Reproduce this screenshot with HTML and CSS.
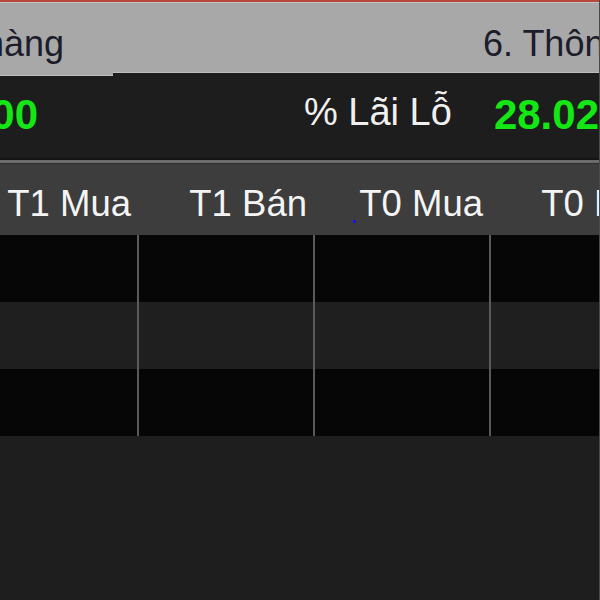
FILE: index.html
```html
<!DOCTYPE html>
<html lang="vi">
<head>
    <meta charset="UTF-8">
    <title>Danh mục</title>
    <link rel="stylesheet" href="styles.css">
</head>
<body>
    <div class="app">
        <div class="topline"></div>
        <div class="tabs">
            <div class="tab tab-active"><span class="tab-text">hàng</span></div>
            <div class="tab tab-next"><span class="tab-text">6. Thông tin</span></div>
        </div>
        <div class="summary">
            <div class="sum-value sum-prev">00</div>
            <div class="sum-label">% Lãi Lỗ</div>
            <div class="sum-value">28.02</div>
        </div>
        <div class="divider"></div>
        <div class="grid">
            <div class="grid-head">
                <div class="head-cell">T1 Mua</div>
                <div class="head-cell">T1 Bán</div>
                <div class="head-cell"><span class="focus-dot"></span>T0 Mua</div>
                <div class="head-cell">T0 Bán</div>
            </div>
            <div class="grid-row row-dark">
                <div class="cell"></div><div class="cell"></div><div class="cell"></div><div class="cell"></div>
            </div>
            <div class="grid-row row-alt">
                <div class="cell"></div><div class="cell"></div><div class="cell"></div><div class="cell"></div>
            </div>
            <div class="grid-row row-dark">
                <div class="cell"></div><div class="cell"></div><div class="cell"></div><div class="cell"></div>
            </div>
        </div>
    </div>
</body>
</html>
```

FILE: styles.css
```css
html, body {
    margin: 0;
    padding: 0;
    background-color: #1e1e1e;
    overflow: hidden;
}
.app {
    width: 600px;
    height: 600px;
    overflow: hidden;
    font-family: 'Liberation Sans', Arial, sans-serif;
    border-right: 1px solid #4a4a4a; /* vien cua so */
    box-sizing: border-box;
}
.topline {
    height: 2px;
    background-color: #b5473c; /* vien do cua so */
    border-bottom: 1px solid #c4c4c4;
}
/* Tabs */
.tabs {
    display: flex;
    height: 70px;
    background-color: #a8a8a8;
    border-bottom: 1px solid #bdbdbd;
    box-sizing: border-box;
}
.tab {
    font-size: 36px;
    line-height: 36px;
    color: #1c1c2a;
    white-space: nowrap;
    overflow: hidden;
    padding-top: 23px;
    box-sizing: border-box;
}
.tab-active {
    width: 113px;
    height: 73px;
    margin-bottom: -3px;
    position: relative;
    background-color: #a8a8a8;
    border-bottom: 1px solid #bdbdbd;
}
.tab-active .tab-text {
    margin-left: -16px;
}
.tab-next {
    margin-left: 370px;
    flex: 1;
}
/* Summary bar */
.summary {
    display: flex;
    align-items: flex-start;
    height: 85px;
    padding-top: 21px;
    box-sizing: border-box;
    background-color: #1d1d1d;
    white-space: nowrap;
}
.sum-value {
    font-size: 42px;
    line-height: 42px;
    font-weight: 700;
    color: #14e814;
}
.sum-prev {
    width: 38px;
    display: flex;
    justify-content: flex-end;
}
.sum-label {
    width: 421px;
    text-align: right;
    font-size: 38px;
    line-height: 37px;
    color: #f0f0f0;
    margin-right: 42px;
}
.divider {
    height: 3px;
    border-top: 2px solid #141414;
    border-bottom: 1px solid #2e2e2e;
    background-color: #6c6c6c;
}
/* Grid */
.grid {
    margin-left: -37px;
    width: 704px;
}
.grid-head, .grid-row {
    display: grid;
    grid-template-columns: repeat(4, 176px);
}
.grid-head {
    height: 71px;
    background-color: #3d3d3d;
}
.head-cell {
    font-size: 36.5px;
    line-height: 36px;
    color: #f4f4f4;
    text-align: right;
    padding: 22px 8px 0 0;
    white-space: nowrap;
}
.focus-dot {
    display: inline-block;
    width: 3px;
    height: 3px;
    background-color: #1414e6;
    margin-right: 3px;
    vertical-align: -7px;
}
.grid-row {
    height: 67px;
}
.row-dark {
    background-color: #060606;
}
.row-alt {
    background-color: #1f1f1f;
}
.cell {
    border-right: 2px solid #5a5a5a;
}
```
